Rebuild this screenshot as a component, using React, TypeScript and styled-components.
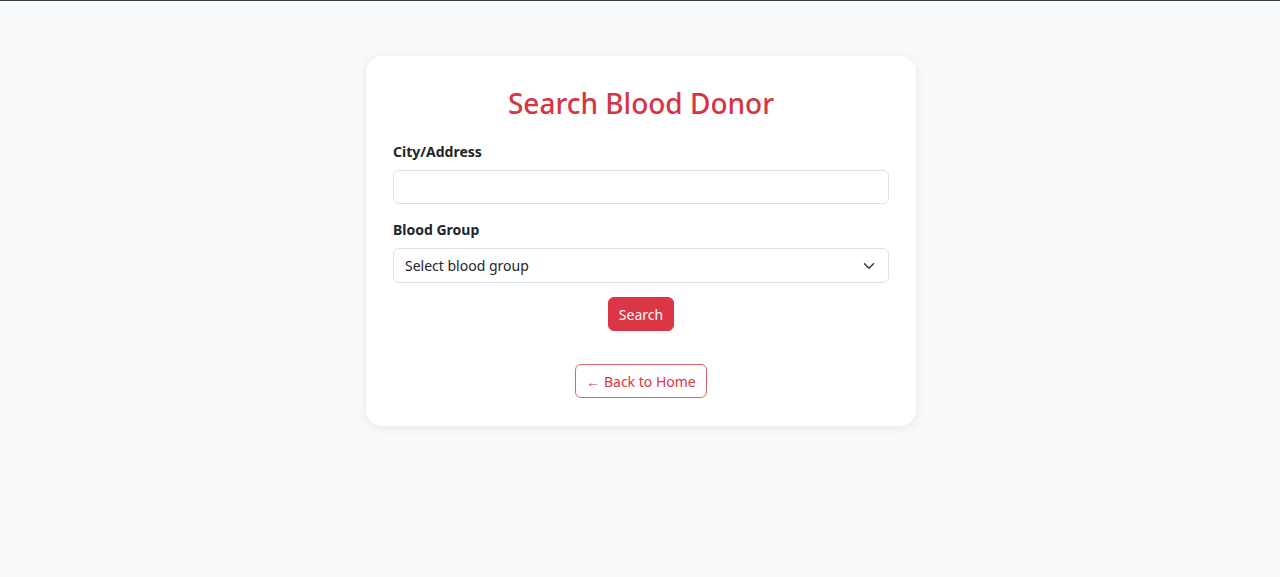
import React from "react";
import styled, { createGlobalStyle } from "styled-components";

const Global = createGlobalStyle`
  html, body { margin: 0; padding: 0; }
  body {
    font-family: "Noto Sans", "Open Sans", sans-serif;
    background: #f8f9fa;
    color: #212529;
  }
  * { box-sizing: border-box; }
`;

const Page = styled.div`
  min-height: 100vh;
  background: #f8f9fa;
  border-top: 1px solid #343a40;
  padding: 55px 0 0 2px;
`;

const Card = styled.div`
  width: 550px;
  margin: 0 auto;
  background: #fff;
  border-radius: 16px;
  box-shadow: 0 2px 10px rgba(0, 0, 0, 0.08);
  padding: 28px 27px 28px;
  display: flex;
  flex-direction: column;
`;

const Title = styled.h2`
  margin: 0 0 18px;
  text-align: center;
  font-size: 28px;
  line-height: 38px;
  font-weight: 500;
  color: #d63545;
`;

const Field = styled.div`
  display: flex;
  flex-direction: column;
  gap: 6px;
  margin-bottom: 14px;
`;

const Label = styled.label`
  font-size: 14px;
  line-height: 24px;
  font-weight: 700;
  color: #212529;
`;

const Input = styled.input`
  height: 34px;
  border: 1px solid #dee2e6;
  border-radius: 6px;
  padding: 0 12px;
  font: inherit;
  font-size: 14px;
  background: #fff;
  outline: none;
`;

const SelectBox = styled.div`
  height: 35px;
  border: 1px solid #dee2e6;
  border-radius: 6px;
  padding: 0 13px 0 11px;
  display: flex;
  align-items: center;
  justify-content: space-between;
  font-size: 14px;
  color: #212529;
`;

const Actions = styled.div`
  display: flex;
  flex-direction: column;
  align-items: center;
  gap: 33px;
`;

const Button = styled.button<{ $outline?: boolean }>`
  height: 34px;
  padding: 0 10px;
  border-radius: 6px;
  font: inherit;
  font-size: 14px;
  cursor: pointer;
  border: 1px solid ${(p) => (p.$outline ? "#e0626e" : "#dc3545")};
  background: ${(p) => (p.$outline ? "#fff" : "#dc3545")};
  color: ${(p) => (p.$outline ? "#dc3545" : "#fff")};
`;

export default function App() {
  return (
    <>
      <Global />
      <Page>
        <Card>
          <Title>Search Blood Donor</Title>
          <Field>
            <Label>City/Address</Label>
            <Input type="text" />
          </Field>
          <Field>
            <Label>Blood Group</Label>
            <SelectBox>
              <span>Select blood group</span>
              <svg width="12" height="12" viewBox="0 0 16 16" fill="none">
                <path d="M2 5l6 6 6-6" stroke="#343a40" strokeWidth="2" strokeLinecap="round" strokeLinejoin="round" />
              </svg>
            </SelectBox>
          </Field>
          <Actions>
            <Button>Search</Button>
            <Button $outline>← Back to Home</Button>
          </Actions>
        </Card>
      </Page>
    </>
  );
}
